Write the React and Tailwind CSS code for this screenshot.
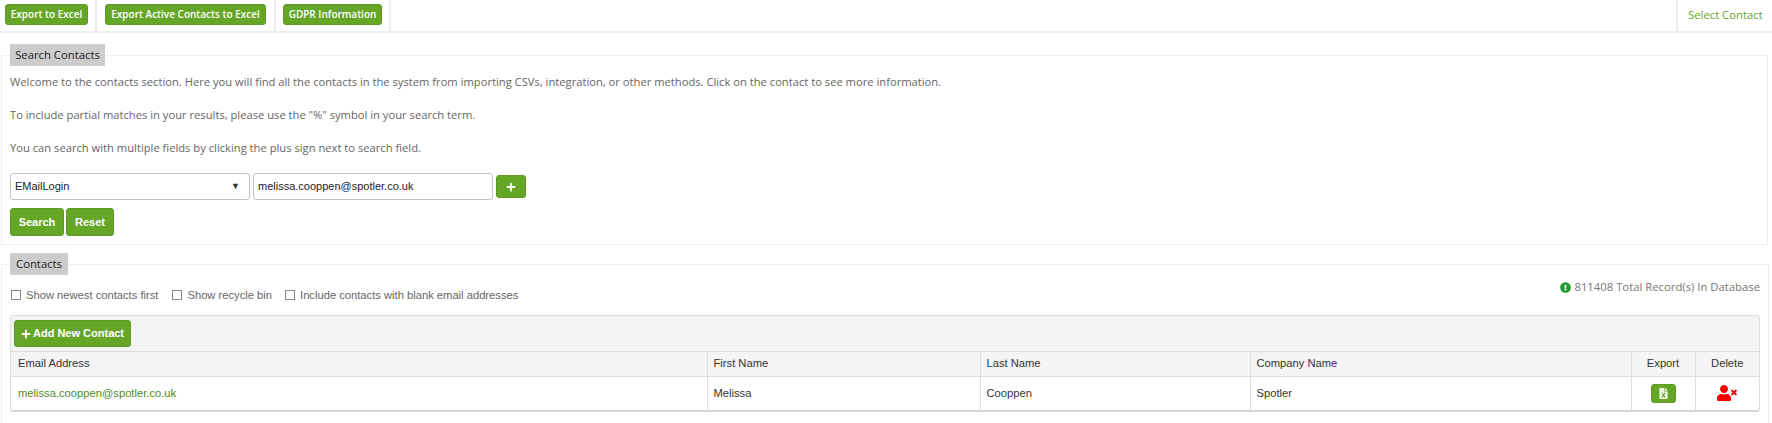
import React from "react";
import { FaPlus, FaExclamationCircle, FaUserTimes, FaFileExcel } from "react-icons/fa";

const open = "font-['Open_Sans',sans-serif]";
const arial = "font-['Liberation_Sans',Arial,sans-serif]";
const GreenBtn = ({ className = "", children }) => (
  <button className={`bg-[#65a627] border border-[#5c9a22] rounded-[3px] text-white whitespace-nowrap ${className}`}>{children}</button>
);

const TopBtn = ({ children, cell, btn }) => (
  <div className={`h-full border-r-2 border-[#eeeeee] flex items-start pt-1 ${cell}`}>
    <GreenBtn className={`h-[21px] text-[10px] font-semibold flex items-center justify-center ${open} ${btn}`}>{children}</GreenBtn>
  </div>
);

const Legend = ({ children, w }) => (
  <legend className={`h-[22px] bg-[#cccccc] text-[#222222] text-[11.3px] whitespace-nowrap flex items-center justify-center ${open} ${w}`}>{children}</legend>
);

const Check = ({ label, className = "" }) => (
  <label className={`flex items-center text-[#666666] text-[11.2px] ${arial} ${className}`}>
    <span className="w-[10px] h-[10px] border border-[#8a8a8a] bg-white mr-[5px]" />
    {label}
  </label>
);

const Th = ({ children, className = "" }) => (
  <th className={`border-r border-[#dddddd] last:border-r-0 font-normal text-[#333333] text-[11.2px] px-[6px] ${className}`}>{children}</th>
);
const Td = ({ children, className = "text-[#333333]" }) => (
  <td className={`border-r border-[#dddddd] last:border-r-0 text-[11.2px] px-[6px] ${className}`}>{children}</td>
);

export default function App() {
  return (
    <div className="w-[1772px] h-[423px] bg-white overflow-hidden">
      <div className="h-[33px] border-b-2 border-[#eeeeee] flex pl-[5px]">
        <TopBtn cell="w-[92px]" btn="w-[83px]">Export to Excel</TopBtn>
        <TopBtn cell="w-[179px] pl-[8px]" btn="w-[161px]">Export Active Contacts to Excel</TopBtn>
        <TopBtn cell="w-[115px] pl-[7px]" btn="w-[99px]">GDPR Information</TopBtn>
        <div className="flex-1" />
        <div className={`w-[96px] border-l-2 border-[#eeeeee] text-[#65a627] text-[11.3px] pl-[10px] pt-[7px] ${open}`}>Select Contact</div>
      </div>

      <fieldset className="mx-[1px] mt-[11px] w-[1767px] h-[201px] border border-[#eeeeee] px-2">
        <Legend w="w-[95px]">Search Contacts</Legend>
        <div className={`text-[#666666] text-[11.2px] leading-[33px] -mt-[1px] ${open}`}>
          <p>Welcome to the contacts section. Here you will find all the contacts in the system from importing CSVs, integration, or other methods. Click on the contact to see more information.</p>
          <p>To include partial matches in your results, please use the "%" symbol in your search term.</p>
          <p>You can search with multiple fields by clicking the plus sign next to search field.</p>
        </div>
        <div className={`flex items-center mt-[9px] ${arial}`}>
          <div className="w-[240px] h-[27px] border border-[#c4c4c4] rounded-[3px] flex items-center justify-between pl-[4px] pr-[9px] text-[11px] text-[#222222]">
            EMailLogin
            <span className="text-[9px] text-[#333333]">▼</span>
          </div>
          <div className="ml-[3px] w-[240px] h-[27px] border border-[#c4c4c4] rounded-[3px] flex items-center pl-[4px] text-[11px] text-[#222222]">melissa.cooppen@spotler.co.uk</div>
          <GreenBtn className="ml-[3px] w-[30px] h-[23px] flex items-center justify-center"><FaPlus className="w-[10px] h-[10px]" /></GreenBtn>
        </div>
        <div className={`flex gap-[2px] mt-[8px] ${arial}`}>
          <GreenBtn className="w-[54px] h-[28px] text-[11px] font-bold">Search</GreenBtn>
          <GreenBtn className="w-[48px] h-[28px] text-[11px] font-bold">Reset</GreenBtn>
        </div>
      </fieldset>

      <fieldset className="mx-[1px] mt-[8px] w-[1767px] h-[190px] border border-[#eeeeee] px-2">
        <Legend w="w-[58px]">Contacts</Legend>
        <div className="flex items-center justify-between h-[34px] -mt-[1px]">
          <div className="flex items-center pt-[9px] pl-[1px]">
            <Check label="Show newest contacts first" />
            <Check label="Show recycle bin" className="ml-[14px]" />
            <Check label="Include contacts with blank email addresses" className="ml-[13px]" />
          </div>
          <div className={`flex items-center text-[#777777] text-[11.3px] -mt-[7px] ${open}`}>
            <FaExclamationCircle className="w-[11px] h-[11px] text-[#1f9d2c] mr-[3px]" />
            811408 Total Record(s) In Database
          </div>
        </div>
        <div className={`w-[1750px] mt-[7px] border border-[#dddddd] border-b-2 border-b-[#d8d8d8] rounded-[3px] ${arial}`}>
          <div className="h-[36px] bg-[#f4f4f4] border-b border-[#dddddd] flex items-start pl-[3px] pt-[4px]">
            <GreenBtn className="w-[117px] h-[27px] text-[11px] font-bold flex items-center justify-center gap-[2px]"><FaPlus className="w-[10px] h-[10px]" />Add New Contact</GreenBtn>
          </div>
          <table className="w-full table-fixed border-collapse">
            <colgroup>
              <col className="w-[696px]" /><col className="w-[273px]" /><col className="w-[270px]" /><col /><col className="w-[64px]" /><col className="w-[64px]" />
            </colgroup>
            <thead>
              <tr className="h-[24px] bg-[#f4f4f4] border-b border-[#dddddd]">
                <Th className="text-left pl-[7px]">Email Address</Th><Th className="text-left">First Name</Th><Th className="text-left">Last Name</Th><Th className="text-left">Company Name</Th>
                <Th className="text-center">Export</Th><Th className="text-center">Delete</Th>
              </tr>
            </thead>
            <tbody>
              <tr className="h-[34px]">
                <Td className="text-[#4f8a1f] pl-[7px]">melissa.cooppen@spotler.co.uk</Td>
                <Td>Melissa</Td><Td>Cooppen</Td><Td>Spotler</Td>
                <Td><GreenBtn className="mx-auto w-[25px] h-[19px] flex items-center justify-center"><FaFileExcel className="w-[9px] h-[11px] opacity-90" /></GreenBtn></Td>
                <Td><FaUserTimes className="mx-auto w-[20px] h-[16px] text-[#ff0000]" /></Td>
              </tr>
            </tbody>
          </table>
        </div>
      </fieldset>
    </div>
  );
}
